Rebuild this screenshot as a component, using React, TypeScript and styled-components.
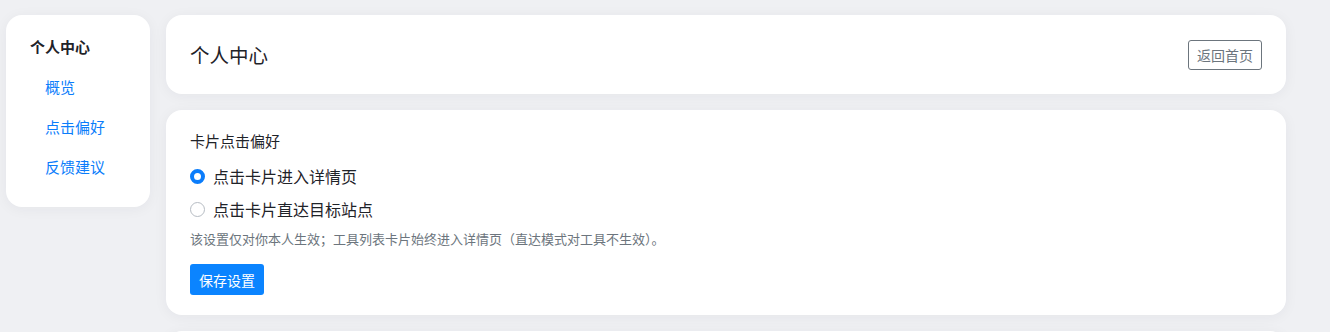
import React, { useState } from 'react';
import styled, { createGlobalStyle } from 'styled-components';

const GlobalStyle = createGlobalStyle`
  body {
    margin: 0;
    background: #eff0f3;
    font-family: "Noto Sans CJK SC", "Noto Sans", "Liberation Sans", sans-serif;
    color: #212529;
  }
`;

const Layout = styled.div`
  display: grid;
  grid-template-columns: 144px 1120px;
  gap: 16px;
  align-items: start;
  padding: 15px 0 0 6px;
`;

const Card = styled.div<{ $pad?: string; $minHeight?: number }>`
  background: #fff;
  border-radius: 16px;
  box-shadow: 0 2px 14px rgba(30, 40, 60, 0.05);
  padding: ${(p) => p.$pad || '20px 24px'};
  min-height: ${(p) => (p.$minHeight ? `${p.$minHeight}px` : 'auto')};
  box-sizing: border-box;
`;

const Sidebar = styled(Card)`
  display: flex;
  flex-direction: column;
  height: 192px;
`;

const SideTitle = styled.div`
  font-size: 15px;
  font-weight: 700;
  line-height: 24px;
  color: #1f2329;
  margin-bottom: 16px;
`;

const SideLink = styled.a`
  display: block;
  padding-left: 15px;
  font-size: 15px;
  line-height: 24px;
  color: #0b7dfb;
  text-decoration: none;
  margin-bottom: 16px;
  cursor: pointer;
`;

const Main = styled.div`
  display: flex;
  flex-direction: column;
  gap: 16px;
`;

const Header = styled(Card)`
  display: flex;
  align-items: center;
  justify-content: space-between;
  height: 79px;
`;

const PageTitle = styled.h1`
  margin: 0;
  font-size: 19.5px;
  font-weight: 400;
  color: #1f2329;
`;

const OutlineButton = styled.button`
  font-family: inherit;
  font-size: 14px;
  color: #6c757d;
  background: #fff;
  border: 1px solid #6c757d;
  border-radius: 3px;
  height: 30px;
  padding: 0 8px;
  cursor: pointer;
`;

const SectionTitle = styled.div`
  font-size: 15px;
  line-height: 22px;
  color: #1f2329;
  margin-bottom: 12px;
`;

const Options = styled.div`
  display: flex;
  flex-direction: column;
  gap: 9px;
`;

const Option = styled.label`
  display: flex;
  align-items: center;
  gap: 8px;
  font-size: 16px;
  line-height: 24px;
  color: #1f2329;
  cursor: pointer;
`;

const RadioDot = styled.span<{ $checked: boolean }>`
  width: 15px;
  height: 15px;
  border-radius: 50%;
  box-sizing: border-box;
  border: ${(p) => (p.$checked ? '4px solid #0b7dfb' : '1px solid #b6bcc3')};
  background: #fff;
  flex-shrink: 0;
`;

const Hint = styled.div`
  font-size: 13px;
  line-height: 18px;
  color: #6c757d;
  margin-top: 9px;
`;

const PrimaryButton = styled.button`
  font-family: inherit;
  font-size: 14px;
  color: #fff;
  background: #0b84ff;
  border: none;
  border-radius: 3px;
  height: 31px;
  padding: 0 9px;
  margin-top: 16px;
  cursor: pointer;
`;

const options = ['点击卡片进入详情页', '点击卡片直达目标站点'];

export default function App() {
  const [choice, setChoice] = useState(0);
  return (
    <>
      <GlobalStyle />
      <Layout>
        <Sidebar $pad="20px 24px">
          <SideTitle>个人中心</SideTitle>
          <SideLink>概览</SideLink>
          <SideLink>点击偏好</SideLink>
          <SideLink>反馈建议</SideLink>
        </Sidebar>
        <Main>
          <Header>
            <PageTitle>个人中心</PageTitle>
            <OutlineButton>返回首页</OutlineButton>
          </Header>
          <Card $pad="20px 24px 20px">
            <SectionTitle>卡片点击偏好</SectionTitle>
            <Options>
              {options.map((o, i) => (
                <Option key={o} onClick={() => setChoice(i)}>
                  <RadioDot $checked={choice === i} />
                  {o}
                </Option>
              ))}
            </Options>
            <Hint>该设置仅对你本人生效；工具列表卡片始终进入详情页（直达模式对工具不生效）。</Hint>
            <PrimaryButton>保存设置</PrimaryButton>
          </Card>
          <Card $minHeight={120} />
        </Main>
      </Layout>
    </>
  );
}
